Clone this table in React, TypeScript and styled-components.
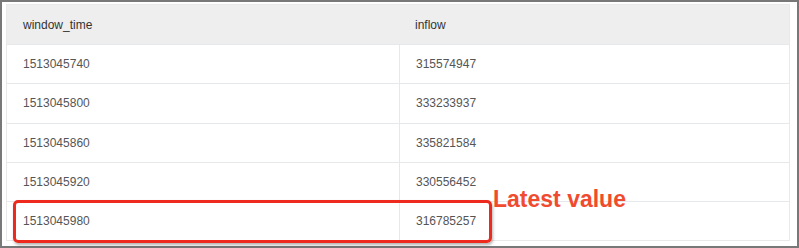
import React from 'react';
import styled, { createGlobalStyle } from 'styled-components';

const GlobalStyle = createGlobalStyle`
  html, body {
    margin: 0;
    padding: 0;
    background: #fff;
  }
`;

const Frame = styled.div`
  position: relative;
  box-sizing: border-box;
  width: 799px;
  height: 248px;
  border: 2px solid #787878;
  padding: 2px 7px 4px 4px;
  background: #fff;
  font-family: 'Liberation Sans', Arial, sans-serif;
`;

const Table = styled.div`
  display: grid;
  grid-template-columns: 392px 1fr;
  border: 1px solid #e9e9e9;
`;

const Cell = styled.div<{ $head?: boolean; $last?: boolean }>`
  box-sizing: border-box;
  display: flex;
  align-items: center;
  height: ${({ $head }) => ($head ? '39px' : '39.3px')};
  padding-left: 16px;
  font-size: 12px;
  color: ${({ $head }) => ($head ? '#333' : '#555')};
  background: ${({ $head }) => ($head ? '#eeeeee' : '#fff')};
  border-top: ${({ $head }) => ($head ? 'none' : '1px solid #e6e9ec')};
  border-left: ${({ $last }) => ($last ? '1px solid #e6e9ec' : 'none')};
`;

const Highlight = styled.div`
  position: absolute;
  left: 11px;
  top: 198px;
  width: 479px;
  height: 43px;
  box-sizing: border-box;
  border: 3.5px solid #ee2a1e;
  border-radius: 5px;
  box-shadow: 1px 2px 3px rgba(0, 0, 0, 0.3);
`;

const Note = styled.div`
  position: absolute;
  left: 491px;
  top: 184px;
  font-size: 23px;
  font-weight: 700;
  color: #f14b2f;
  line-height: 26px;
`;

const rows = [
  ['1513045740', '315574947'],
  ['1513045800', '333233937'],
  ['1513045860', '335821584'],
  ['1513045920', '330556452'],
  ['1513045980', '316785257'],
];

export default function App() {
  return (
    <>
      <GlobalStyle />
      <Frame>
        <Table>
          <Cell $head>window_time</Cell>
          <Cell $head>inflow</Cell>
          {rows.map(([t, v]) => (
            <React.Fragment key={t}>
              <Cell>{t}</Cell>
              <Cell $last>{v}</Cell>
            </React.Fragment>
          ))}
        </Table>
        <Highlight />
        <Note>Latest value</Note>
      </Frame>
    </>
  );
}
